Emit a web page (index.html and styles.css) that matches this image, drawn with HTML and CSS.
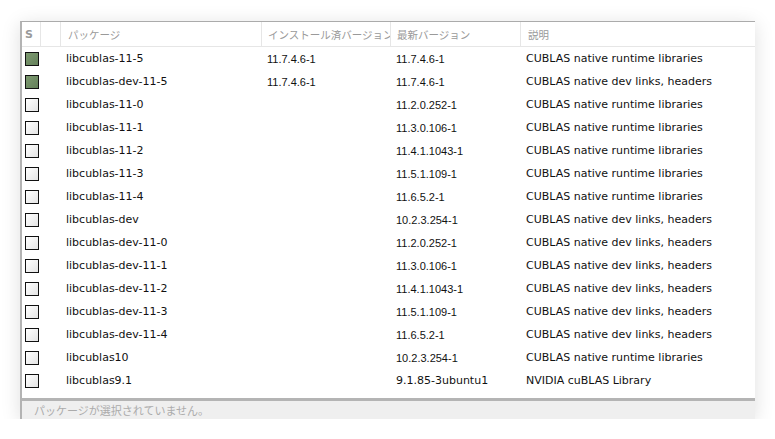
FILE: index.html
```html
<!DOCTYPE html>
<html lang="ja">
<head>
<meta charset="utf-8">
<title>パッケージ</title>
<link rel="stylesheet" href="styles.css">
</head>
<body>
<div class="window">
  <div class="table">
    <div class="row head">
      <div class="cell c-s">S</div>
      <div class="cell c-x"></div>
      <div class="cell c-name">パッケージ</div>
      <div class="cell c-inst">インストール済バージョン</div>
      <div class="cell c-latest">最新バージョン</div>
      <div class="cell c-desc">説明</div>
    </div>
    <div class="row"><div class="cell c-s"><span class="box on"></span></div><div class="cell c-x"></div><div class="cell c-name">libcublas-11-5</div><div class="cell c-inst ver">11.7.4.6-1</div><div class="cell c-latest ver">11.7.4.6-1</div><div class="cell c-desc">CUBLAS native runtime libraries</div></div>
    <div class="row"><div class="cell c-s"><span class="box on"></span></div><div class="cell c-x"></div><div class="cell c-name">libcublas-dev-11-5</div><div class="cell c-inst ver">11.7.4.6-1</div><div class="cell c-latest ver">11.7.4.6-1</div><div class="cell c-desc">CUBLAS native dev links, headers</div></div>
    <div class="row"><div class="cell c-s"><span class="box"></span></div><div class="cell c-x"></div><div class="cell c-name">libcublas-11-0</div><div class="cell c-inst"></div><div class="cell c-latest ver">11.2.0.252-1</div><div class="cell c-desc">CUBLAS native runtime libraries</div></div>
    <div class="row"><div class="cell c-s"><span class="box"></span></div><div class="cell c-x"></div><div class="cell c-name">libcublas-11-1</div><div class="cell c-inst"></div><div class="cell c-latest ver">11.3.0.106-1</div><div class="cell c-desc">CUBLAS native runtime libraries</div></div>
    <div class="row"><div class="cell c-s"><span class="box"></span></div><div class="cell c-x"></div><div class="cell c-name">libcublas-11-2</div><div class="cell c-inst"></div><div class="cell c-latest ver">11.4.1.1043-1</div><div class="cell c-desc">CUBLAS native runtime libraries</div></div>
    <div class="row"><div class="cell c-s"><span class="box"></span></div><div class="cell c-x"></div><div class="cell c-name">libcublas-11-3</div><div class="cell c-inst"></div><div class="cell c-latest ver">11.5.1.109-1</div><div class="cell c-desc">CUBLAS native runtime libraries</div></div>
    <div class="row"><div class="cell c-s"><span class="box"></span></div><div class="cell c-x"></div><div class="cell c-name">libcublas-11-4</div><div class="cell c-inst"></div><div class="cell c-latest ver">11.6.5.2-1</div><div class="cell c-desc">CUBLAS native runtime libraries</div></div>
    <div class="row"><div class="cell c-s"><span class="box"></span></div><div class="cell c-x"></div><div class="cell c-name">libcublas-dev</div><div class="cell c-inst"></div><div class="cell c-latest ver">10.2.3.254-1</div><div class="cell c-desc">CUBLAS native dev links, headers</div></div>
    <div class="row"><div class="cell c-s"><span class="box"></span></div><div class="cell c-x"></div><div class="cell c-name">libcublas-dev-11-0</div><div class="cell c-inst"></div><div class="cell c-latest ver">11.2.0.252-1</div><div class="cell c-desc">CUBLAS native dev links, headers</div></div>
    <div class="row"><div class="cell c-s"><span class="box"></span></div><div class="cell c-x"></div><div class="cell c-name">libcublas-dev-11-1</div><div class="cell c-inst"></div><div class="cell c-latest ver">11.3.0.106-1</div><div class="cell c-desc">CUBLAS native dev links, headers</div></div>
    <div class="row"><div class="cell c-s"><span class="box"></span></div><div class="cell c-x"></div><div class="cell c-name">libcublas-dev-11-2</div><div class="cell c-inst"></div><div class="cell c-latest ver">11.4.1.1043-1</div><div class="cell c-desc">CUBLAS native dev links, headers</div></div>
    <div class="row"><div class="cell c-s"><span class="box"></span></div><div class="cell c-x"></div><div class="cell c-name">libcublas-dev-11-3</div><div class="cell c-inst"></div><div class="cell c-latest ver">11.5.1.109-1</div><div class="cell c-desc">CUBLAS native dev links, headers</div></div>
    <div class="row"><div class="cell c-s"><span class="box"></span></div><div class="cell c-x"></div><div class="cell c-name">libcublas-dev-11-4</div><div class="cell c-inst"></div><div class="cell c-latest ver">11.6.5.2-1</div><div class="cell c-desc">CUBLAS native dev links, headers</div></div>
    <div class="row"><div class="cell c-s"><span class="box"></span></div><div class="cell c-x"></div><div class="cell c-name">libcublas10</div><div class="cell c-inst"></div><div class="cell c-latest ver">10.2.3.254-1</div><div class="cell c-desc">CUBLAS native runtime libraries</div></div>
    <div class="row"><div class="cell c-s"><span class="box"></span></div><div class="cell c-x"></div><div class="cell c-name">libcublas9.1</div><div class="cell c-inst"></div><div class="cell c-latest">9.1.85-3ubuntu1</div><div class="cell c-desc">NVIDIA cuBLAS Library</div></div>
  </div>
  <div class="status">パッケージが選択されていません。</div>
</div>
</body>
</html>
```

FILE: styles.css
```css
html, body {
  margin: 0;
  padding: 0;
  background: #ffffff;
}
body {
  padding: 21px 0 0 20px;
  font-family: "DejaVu Sans", "Noto Sans CJK JP", sans-serif;
  font-size: 11px;
  color: #111;
}
.window {
  width: 735px;
  background: #fff;
  border-left: 2px solid #b3b3b3;
  border-top: 1px solid #ababab;
  box-shadow: 0 3px 18px rgba(0, 0, 0, 0.13);
  box-sizing: border-box;
}
.table {
  height: 376px;
}
.row {
  display: grid;
  grid-template-columns: 19px 20px 201px 129px 130px 1fr;
  height: 23px;
  align-items: center;
}
.row.head {
  height: 24px;
  border-bottom: 1px solid #e6e6e6;
  align-items: stretch;
  color: #9a9a9a;
  font-size: 10.5px;
}
.head .cell {
  border-right: 1px solid #e6e6e6;
  display: flex;
  align-items: center;
  padding-left: 6px;
}
.head .c-s {
  padding-left: 5px;
  font-weight: bold;
  font-size: 11px;
}
.head .c-name { padding-left: 7px; }
.head .c-desc { border-right: none; padding-left: 7px; }
.cell {
  white-space: nowrap;
  overflow: hidden;
  padding-left: 5px;
  box-sizing: border-box;
}
.row .c-s {
  padding-left: 3px;
  display: flex;
  align-items: center;
}
.ver {
  font-family: "Liberation Sans", sans-serif;
  font-size: 11px;
}
.box {
  display: block;
  width: 14px;
  height: 14px;
  box-sizing: border-box;
  border: 1px solid #111;
  background: linear-gradient(135deg, #ffffff 0%, #e4e4e4 100%);
}
.box.on {
  background: linear-gradient(135deg, #7d9a70 0%, #64805a 100%);
}
.status {
  border-top: 3px solid #b4b4b4;
  background: #efefef;
  height: 16px;
  box-sizing: content-box;
  padding-top: 2px;
  line-height: 17px;
  padding-left: 12px;
  color: #ababab;
  font-size: 11px;
}
```
